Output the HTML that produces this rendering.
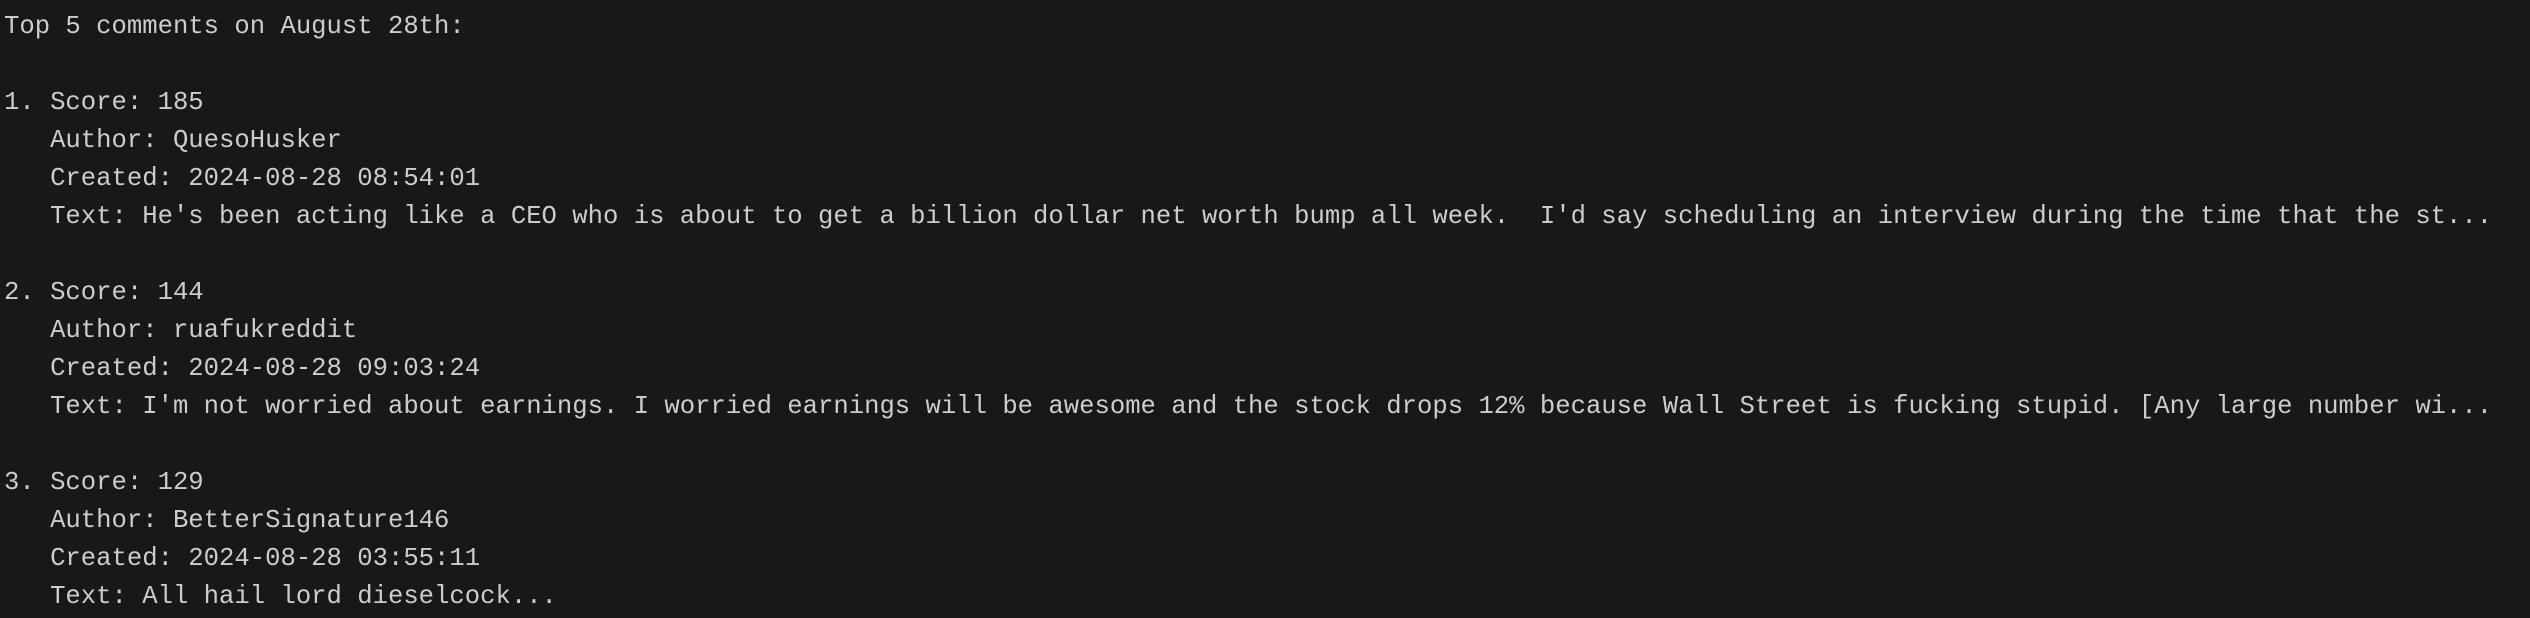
<!DOCTYPE html>
<html><head><meta charset="utf-8"><style>
html,body{margin:0;padding:0;background:#181818;width:2530px;height:618px;overflow:hidden}
pre{margin:0;padding:8px 0 0 4px;font-family:"Liberation Mono",monospace;font-size:25.6px;line-height:38px;color:#cccccc;white-space:pre}
</style></head><body><pre>Top 5 comments on August 28th:

1. Score: 185
   Author: QuesoHusker
   Created: 2024-08-28 08:54:01
   Text: He's been acting like a CEO who is about to get a billion dollar net worth bump all week.  I'd say scheduling an interview during the time that the st...

2. Score: 144
   Author: ruafukreddit
   Created: 2024-08-28 09:03:24
   Text: I'm not worried about earnings. I worried earnings will be awesome and the stock drops 12% because Wall Street is fucking stupid. [Any large number wi...

3. Score: 129
   Author: BetterSignature146
   Created: 2024-08-28 03:55:11
   Text: All hail lord dieselcock...</pre></body></html>
